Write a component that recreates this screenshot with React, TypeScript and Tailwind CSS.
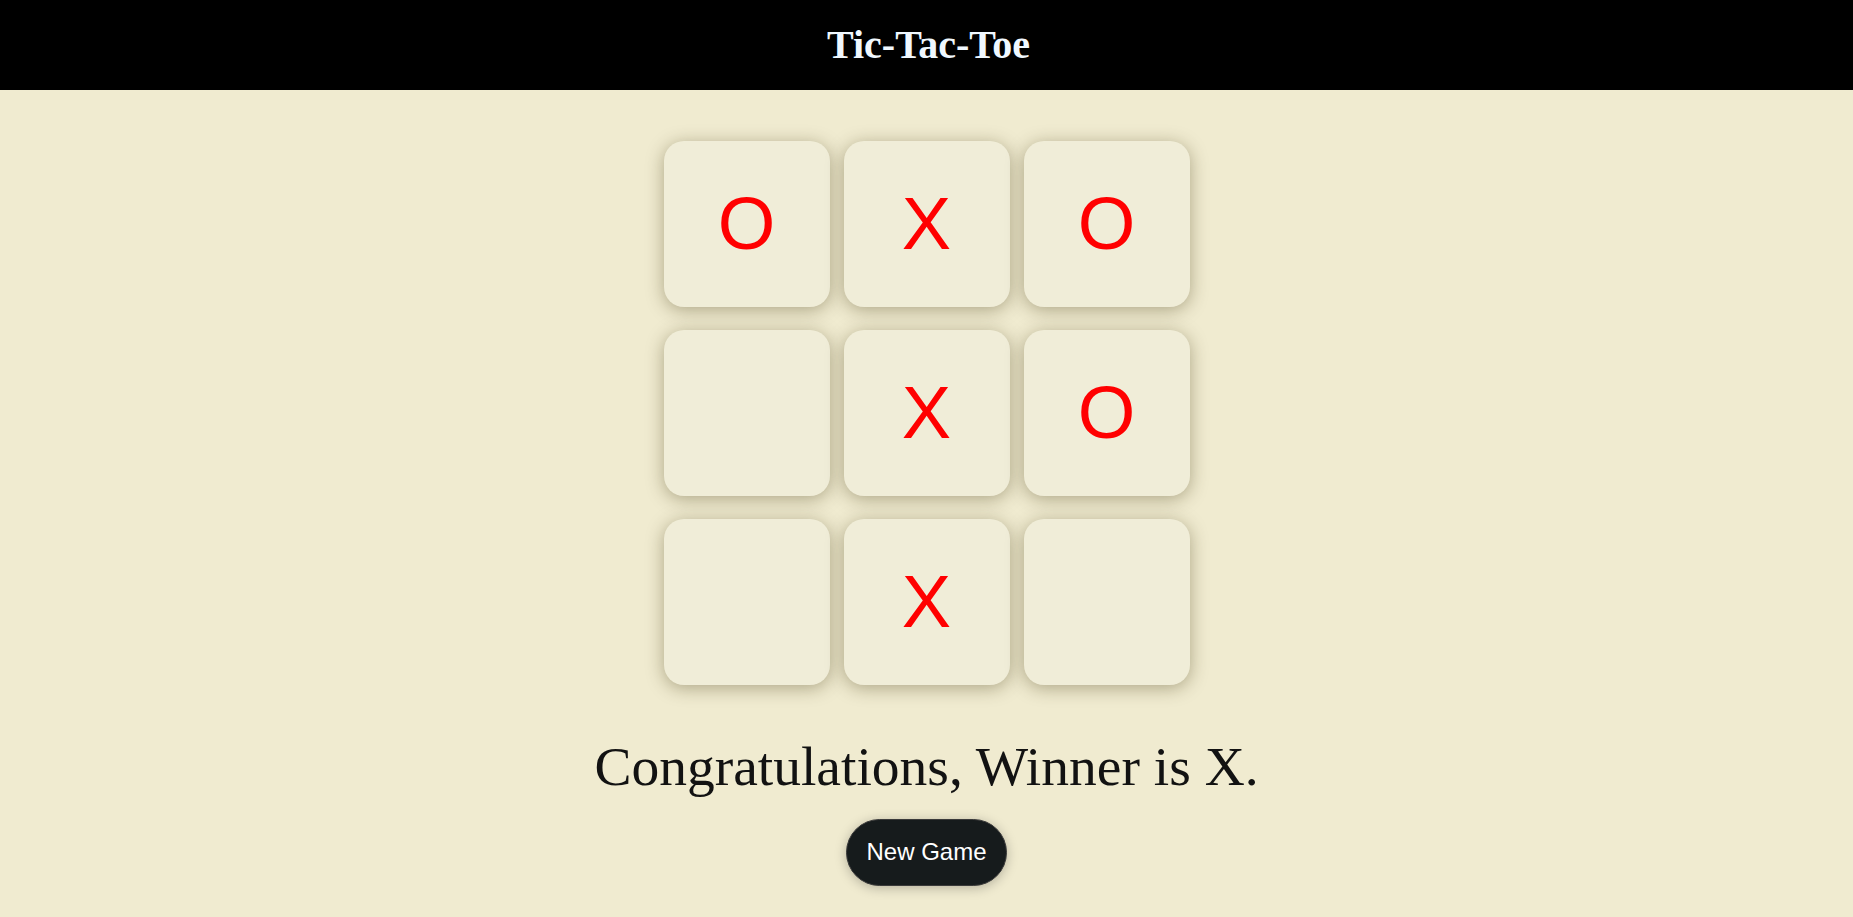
import { useState } from 'react';

type Mark = 'X' | 'O' | '';

const initialBoard: Mark[] = ['O', 'X', 'O', '', 'X', 'O', '', 'X', ''];

export default function App() {
  const [board] = useState<Mark[]>(initialBoard);
  const rows = [board.slice(0, 3), board.slice(3, 6), board.slice(6, 9)];

  return (
    <div className="min-h-[917px] bg-[#f0ebd0] flex flex-col">
      <header className="h-[90px] bg-black flex items-center justify-center">
        <h1 className="ml-[4px] text-[40px] leading-[1.15] font-bold text-[#f0f8ff] font-['Liberation_Serif',serif]">Tic-Tac-Toe</h1>
      </header>

      <main className="flex flex-col items-center">
        <div className="mt-[51px] flex flex-col gap-[23px]">
          {rows.map((row, r) => (
            <div key={r} className="flex gap-[14px]">
              {row.map((cell, c) => (
                <div
                  key={c}
                  className="w-[166px] h-[166px] rounded-[20px] bg-[#f0edd8] shadow-[0_3px_18px_rgba(60,50,10,0.38)] flex items-center justify-center text-[74px] leading-none text-[#ff0000] font-['Liberation_Sans',Arial,sans-serif]"
                >
                  {cell}
                </div>
              ))}
            </div>
          ))}
        </div>

        <p className="mt-[50px] text-[55.5px] leading-[1.15] text-[#121212] font-['Liberation_Serif',serif]">
          Congratulations, Winner is X.
        </p>

        <button className="mt-[20px] h-[67px] px-[19px] rounded-full bg-[#161b1c] border border-[#3a3a3a] text-white text-[24px] leading-none shadow-[0_2px_12px_rgba(0,0,0,0.25)] font-['Liberation_Sans',Arial,sans-serif]">
          New Game
        </button>
      </main>
    </div>
  );
}
